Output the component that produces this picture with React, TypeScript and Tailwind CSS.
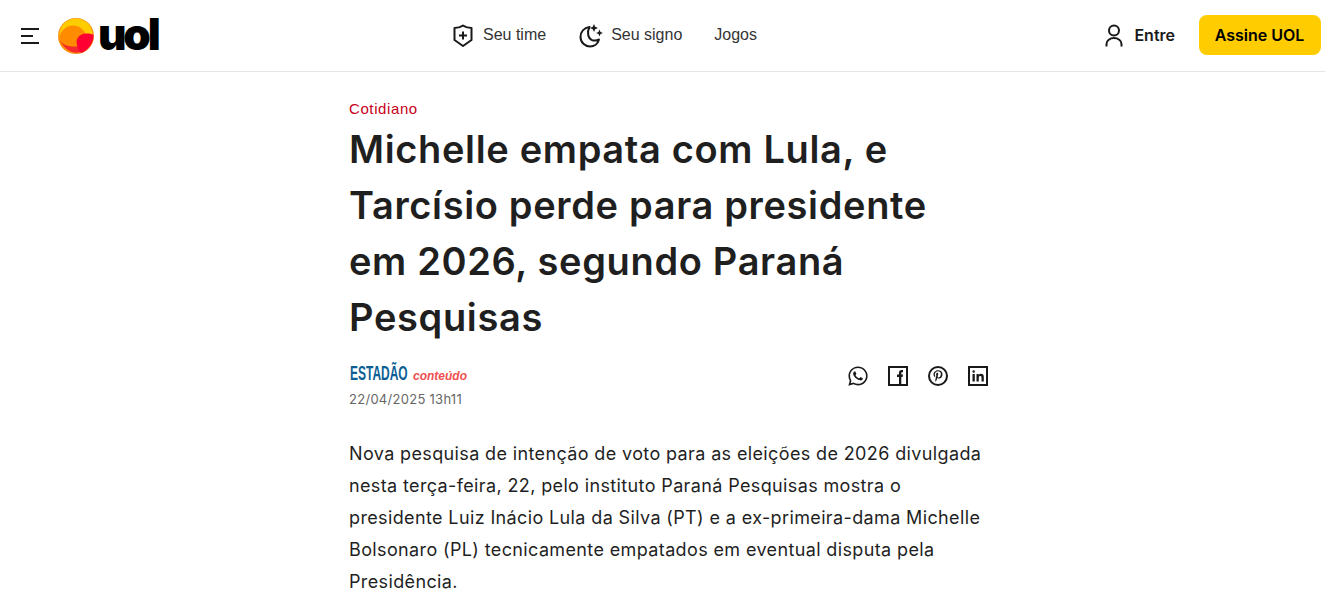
import { FaWhatsapp, FaPinterestP } from "react-icons/fa";

const sans = "font-['Inter','Noto_Sans',sans-serif]";

function Burger() {
  return (
    <svg width="20" height="16" viewBox="0 0 20 16" fill="#191919">
      <rect x="1" y="0" width="18" height="2" />
      <rect x="1" y="7" width="12" height="2" />
      <rect x="1" y="14" width="18" height="2" />
    </svg>
  );
}

function Sun() {
  return (
    <svg width="36" height="36" viewBox="0 0 36 36">
      <circle cx="18" cy="18" r="18" fill="#f7941d" />
      <circle cx="18" cy="17" r="16.5" fill="#ffcc00" />
      <circle cx="15" cy="21" r="13.5" fill="#ff8c00" />
      <path d="M1 20 C3 26 8 28 14 28.5 C18 29 20 28 21 27 L30 30 C24 37 8 38 1 20 Z" fill="#f4282d" />
      <path d="M20 29 C16 22 21 15 29 15.5 C32 15.5 34 16 35.5 17 C36 24 31 32 23 35 C21 33 20 31 20 29 Z" fill="#ff0033" />
    </svg>
  );
}

function ShieldPlus() {
  return (
    <svg width="20" height="24" viewBox="0 0 20 24" fill="none" stroke="#191919" strokeWidth="2">
      <path d="M1.5 4 C5 4 8 3 10 1.5 C12 3 15 4 18.5 4 V16 L10 22 L1.5 16 Z" strokeLinejoin="round" />
      <path d="M10 7.5 V15.5 M6 11.5 H14" />
    </svg>
  );
}

function MoonStars() {
  return (
    <svg width="24" height="24" viewBox="0 0 24 24" fill="none">
      <path d="M10.5 3 C5 4 1.5 8 1.5 13 C1.5 18.5 6 22.5 11 22.5 C15.5 22.5 19 19.5 20 15.5 C17.5 16.8 15 17 12.5 15.8 C9 14 7.8 8 10.5 3 Z" stroke="#191919" strokeWidth="2" strokeLinejoin="round" />
      <path d="M15 0 L16.2 2.8 L19 4 L16.2 5.2 L15 8 L13.8 5.2 L11 4 L13.8 2.8 Z" fill="#191919" />
      <path d="M20.5 5.5 L21.5 8 L24 9 L21.5 10 L20.5 12.5 L19.5 10 L17 9 L19.5 8 Z" fill="#191919" />
    </svg>
  );
}

function User() {
  return (
    <svg width="20" height="24" viewBox="0 0 20 24" fill="none" stroke="#191919" strokeWidth="2">
      <circle cx="10" cy="6.5" r="5" />
      <path d="M2.5 22.5 V20 C2.5 16.5 6 14 10 14 C14 14 17.5 16.5 17.5 20 V22.5" />
    </svg>
  );
}

function Facebook() {
  return (
    <svg width="20" height="20" viewBox="0 0 20 20" fill="none">
      <rect x="1" y="1" width="18" height="18" stroke="#191919" strokeWidth="2" />
      <path d="M11 19 V11 H9 V8.5 H11 V6.5 C11 5 12 4 13.5 4 H15 V6.3 H14 C13.4 6.3 13.3 6.6 13.3 7 V8.5 H15 L14.6 11 H13.3 V19 Z" fill="#191919" />
    </svg>
  );
}

function Linkedin() {
  return (
    <svg width="20" height="20" viewBox="0 0 20 20" fill="none">
      <rect x="1" y="1" width="18" height="18" stroke="#191919" strokeWidth="2" />
      <path d="M4.5 8 H6.8 V15.5 H4.5 Z M4.4 5.4 a1.25 1.25 0 1 0 2.5 0 a1.25 1.25 0 1 0 -2.5 0 Z M8.5 8 H10.7 V9 C11.2 8.2 12 7.8 13 7.8 C15 7.8 15.8 9 15.8 11 V15.5 H13.5 V11.4 C13.5 10.4 13.1 9.9 12.3 9.9 C11.4 9.9 10.8 10.5 10.8 11.5 V15.5 H8.5 Z" fill="#191919" />
    </svg>
  );
}

function Pinterest() {
  return (
    <div className="flex h-5 w-5 items-center justify-center rounded-full border-2 border-[#191919]">
      <FaPinterestP className="h-3 w-3 text-[#191919]" />
    </div>
  );
}

export default function App() {
  return (
    <div className={`h-[595px] overflow-hidden bg-white ${sans} text-[#191919]`}>
      <header className="flex h-[72px] items-center border-b border-[#e6e6e6] pl-[20px] pr-[4px]">
        <div className="flex w-[433px] items-center gap-[18px]">
          <Burger />
          <div className="flex items-center gap-[4px]">
            <Sun />
            <span className="-mt-[3px] font-['Inter',sans-serif] text-[44px] leading-none font-black tracking-[-3.2px] text-black">uol</span>
          </div>
        </div>
        <nav className="flex items-center font-['Liberation_Sans',sans-serif] text-[16px] text-[#333]">
          <a className="flex items-center gap-[10px]"><ShieldPlus /><span className="pb-[2px]">Seu time</span></a>
          <a className="ml-[33px] flex items-center gap-[8px]"><MoonStars /><span className="pb-[2px]">Seu signo</span></a>
          <a className="ml-[32px] pb-[2px]">Jogos</a>
        </nav>
        <div className="ml-auto flex items-center gap-[24px]">
          <a className="flex items-center gap-[10px] text-[16px] font-semibold"><User /><span className="pb-[2px]">Entre</span></a>
          <button className="-mt-px h-[40px] w-[122px] rounded-[8px] bg-[#ffcc00] pr-[1px] pb-[1px] text-[16px] font-semibold text-black">Assine UOL</button>
        </div>
      </header>
      <main className="ml-[349px] w-[640px] pt-[27px]">
        <p className="font-['Liberation_Sans',sans-serif] text-[15px] leading-[20px] tracking-[0.6px] text-[#c70019]">Cotidiano</p>
        <h1 className="mt-[2px] w-[620px] text-[38px] leading-[56px] font-semibold tracking-[0.65px] text-[#1f1f1f]">
          Michelle empata com Lula, e Tarcísio perde para presidente em 2026, segundo Paraná Pesquisas
        </h1>
        <div className="mt-[16px] flex items-start justify-between pr-[1px]">
          <div>
            <div className="flex items-baseline pl-[1px]">
              <span className="w-[63px] origin-left scale-x-[0.57] font-['Liberation_Sans',sans-serif] text-[21px] leading-[24px] font-bold whitespace-nowrap text-[#0b5f94]">ESTADÃO</span>
              <span className="font-['Liberation_Sans',sans-serif] text-[12px] font-bold text-[#f05050] italic">conteúdo</span>
            </div>
            <p className="mt-[5px] text-[13px] leading-[18px] tracking-[0.28px] text-[#666]">22/04/2025 13h11</p>
          </div>
          <div className="flex items-center gap-[20px] pt-[4px]">
            <FaWhatsapp className="-mx-px h-[22px] w-[22px]" />
            <Facebook />
            <Pinterest />
            <Linkedin />
          </div>
        </div>
        <p className="mt-[30px] w-[640px] text-[18px] leading-[32px] tracking-[0.37px] text-[#1f1f1f]">
          Nova pesquisa de intenção de voto para as eleições de 2026 divulgada nesta terça-feira, 22, pelo instituto Paraná Pesquisas mostra o presidente Luiz Inácio Lula da Silva (PT) e a ex-primeira-dama Michelle Bolsonaro (PL) tecnicamente empatados em eventual disputa pela Presidência.
        </p>
      </main>
    </div>
  );
}
